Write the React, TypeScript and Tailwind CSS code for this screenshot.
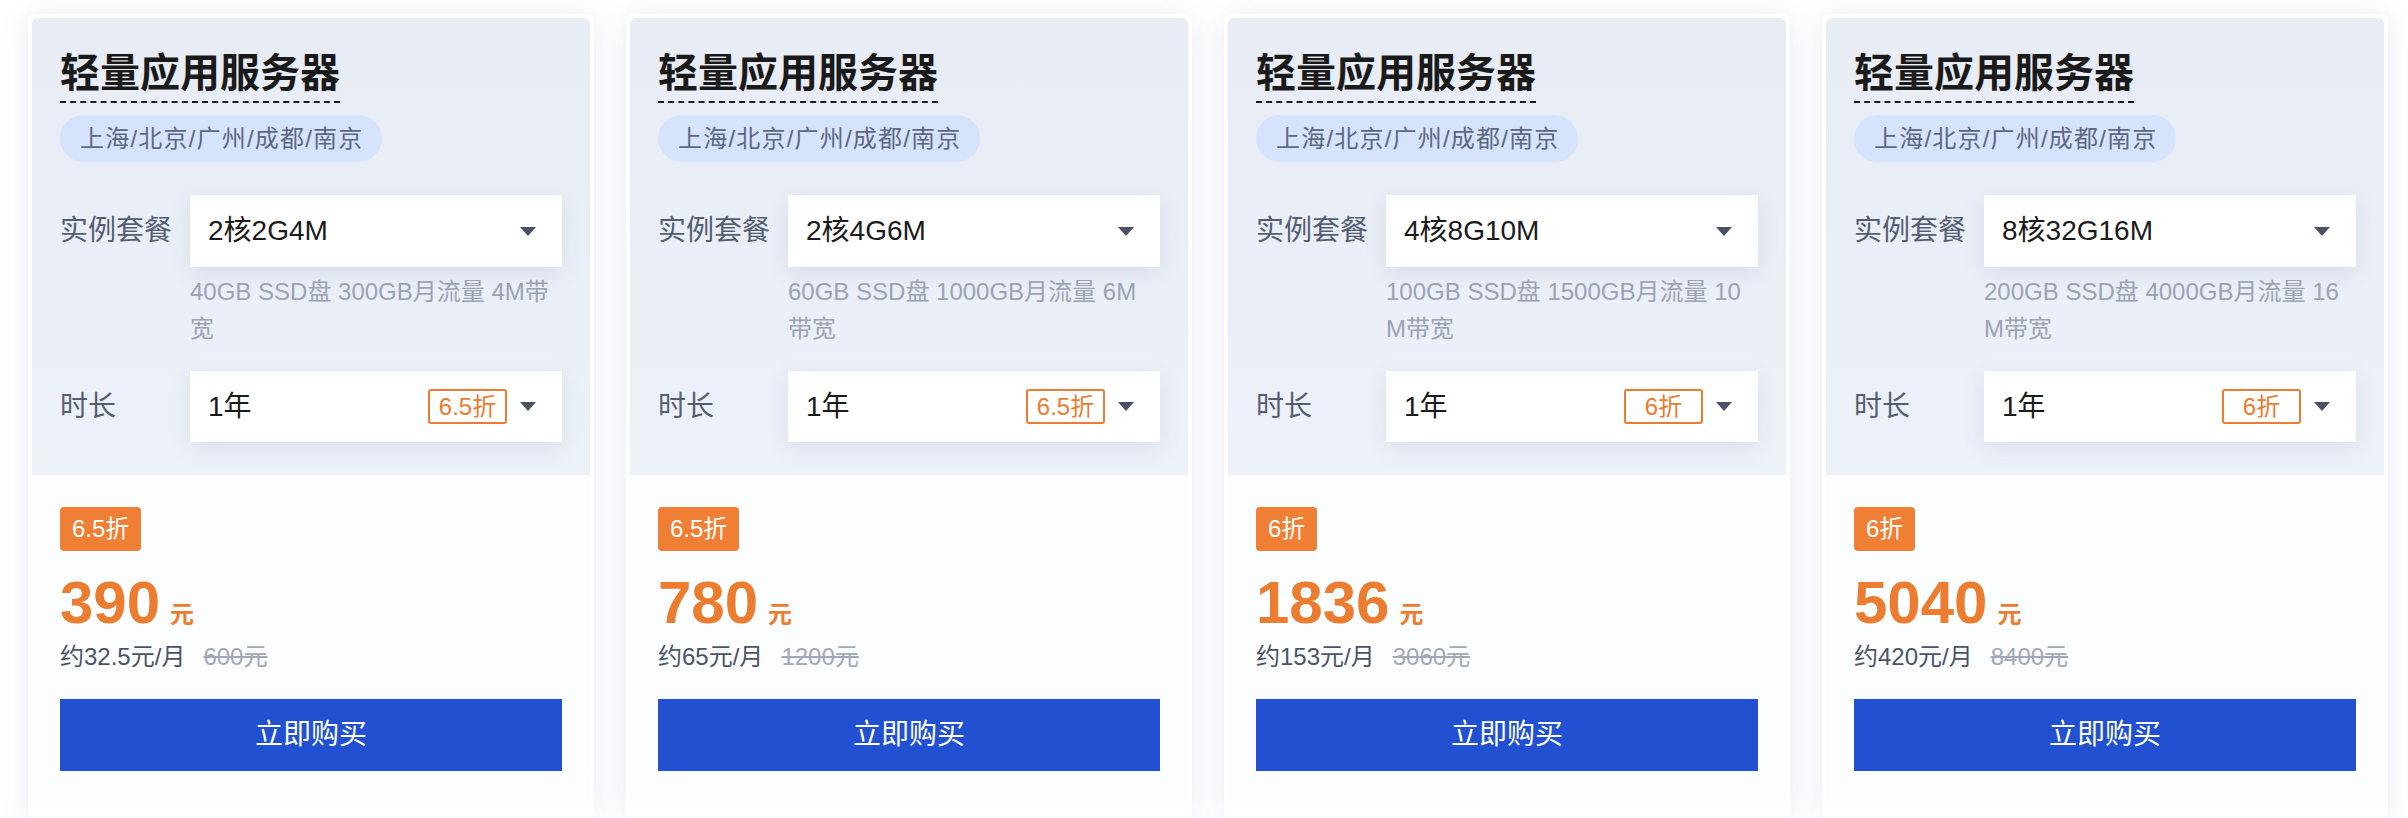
import React from "react";

type Plan = {
  spec: string;
  desc: [string, string];
  discount: string;
  price: string;
  monthly: string;
  original: string;
};

const plans: Plan[] = [
  {
    spec: "2核2G4M",
    desc: ["40GB SSD盘 300GB月流量 4M带", "宽"],
    discount: "6.5折",
    price: "390",
    monthly: "约32.5元/月",
    original: "600元",
  },
  {
    spec: "2核4G6M",
    desc: ["60GB SSD盘 1000GB月流量 6M", "带宽"],
    discount: "6.5折",
    price: "780",
    monthly: "约65元/月",
    original: "1200元",
  },
  {
    spec: "4核8G10M",
    desc: ["100GB SSD盘 1500GB月流量 10", "M带宽"],
    discount: "6折",
    price: "1836",
    monthly: "约153元/月",
    original: "3060元",
  },
  {
    spec: "8核32G16M",
    desc: ["200GB SSD盘 4000GB月流量 16", "M带宽"],
    discount: "6折",
    price: "5040",
    monthly: "约420元/月",
    original: "8400元",
  },
];

function Caret() {
  return (
    <svg width="16" height="9" viewBox="0 0 16 9" className="shrink-0">
      <path d="M0 0h16L8 9z" fill="#4a5268" />
    </svg>
  );
}

function PlanCard({ plan }: { plan: Plan }) {
  return (
    <div className="flex w-[566px] shrink-0 flex-col rounded-[6px] bg-white px-[4px] pt-[4px] shadow-[0_2px_28px_rgba(110,130,175,0.16)]">
      {/* config */}
      <div className="rounded-t-[6px] bg-gradient-to-b from-[#e7ecf5] to-[#edf1f8] px-[28px] pb-[33px] pt-[28px]">
        <div>
          <span className="inline-block border-b-2 border-dashed border-[#1a1a1a] text-[40px] font-bold leading-[55px] text-[#1a1a1a]">
            轻量应用服务器
          </span>
        </div>
        <div className="mt-[12px]">
          <span className="inline-flex h-[47px] items-center rounded-full bg-[#d6e3fc] pl-[20px] pr-[19px] text-[24px] tracking-[1.2px] text-[#5d6782]">
            上海/北京/广州/成都/南京
          </span>
        </div>

        <div className="mt-[33px] flex items-center">
          <span className="w-[130px] shrink-0 text-[28px] text-[#535d74]">实例套餐</span>
          <div className="flex h-[72px] flex-1 items-center justify-between bg-white pl-[18px] pr-[26px] shadow-[0_6px_20px_rgba(100,120,170,0.14)]">
            <span className="text-[28px] text-[#1a1a1a]">{plan.spec}</span>
            <Caret />
          </div>
        </div>
        <div className="ml-[130px] mt-[6px] text-[24px] leading-[37px] text-[#9aa3b5]">
          <div>{plan.desc[0]}</div>
          <div>{plan.desc[1]}</div>
        </div>

        <div className="mt-[24px] flex items-center">
          <span className="w-[130px] shrink-0 text-[28px] text-[#535d74]">时长</span>
          <div className="flex h-[71px] flex-1 items-center bg-white pl-[18px] pr-[26px] shadow-[0_6px_20px_rgba(100,120,170,0.14)]">
            <span className="flex-1 text-[28px] text-[#1a1a1a]">1年</span>
            <span className="mr-[13px] flex h-[35px] w-[79px] items-center justify-center rounded-[3px] border-2 border-[#ec7c30] text-[24px] text-[#ec7c30]">
              {plan.discount}
            </span>
            <Caret />
          </div>
        </div>
      </div>

      {/* price */}
      <div className="bg-[#fcfdfe] px-[28px] pb-[31px] pt-[32px]">
        <span className="inline-flex h-[44px] items-center rounded-[4px] bg-[#ee7f34] px-[12px] text-[24px] text-white">
          {plan.discount}
        </span>
        <div className="mt-[22px] flex items-baseline text-[#ec7d30]">
          <span className="text-[60px] font-semibold leading-[60px]">{plan.price}</span>
          <span className="ml-[10px] text-[24px] font-bold">元</span>
        </div>
        <div className="mt-[8px] flex items-center text-[24px] leading-[32px]">
          <span className="text-[#4a5468]">{plan.monthly}</span>
          <span className="ml-[18px] text-[#a0a8b9] line-through">{plan.original}</span>
        </div>
        <button className="mt-[26px] flex h-[72px] w-full items-center justify-center bg-[#2151d0] text-[28px] text-white">
          立即购买
        </button>
      </div>
    </div>
  );
}

export default function App() {
  return (
    <div
      className="flex h-[818px] w-[2408px] gap-[32px] bg-white pl-[28px] pt-[14px]"
      style={{ fontFamily: '"Liberation Sans", "Noto Sans CJK SC", sans-serif' }}
    >
      {plans.map((p) => (
        <PlanCard key={p.spec} plan={p} />
      ))}
    </div>
  );
}
